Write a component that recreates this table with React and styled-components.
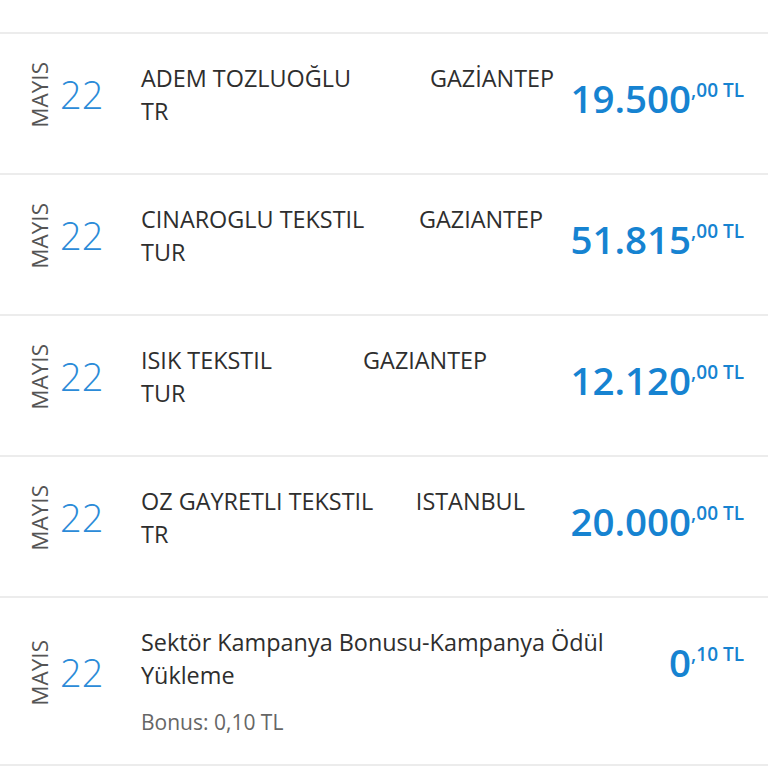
import styled, { createGlobalStyle } from 'styled-components'

const GlobalStyle = createGlobalStyle`
	html, body {
		margin: 0;
		padding: 0;
		background: #ffffff;
	}
	body {
		font-family: "Open Sans", "Noto Sans", sans-serif;
	}
`

// merchant field is space padded like the bank's statement text
const pad = (name, n) => name + ' '.repeat(n)

const transactions = [
	{ id: 1, month: 'MAYIS', day: '22', title: pad('ADEM TOZLUOĞLU', 13) + 'GAZİANTEP\nTR', whole: '19.500', cents: '00' },
	{ id: 2, month: 'MAYIS', day: '22', title: pad('CINAROGLU TEKSTIL', 9) + 'GAZIANTEP\nTUR', whole: '51.815', cents: '00' },
	{ id: 3, month: 'MAYIS', day: '22', title: pad('ISIK TEKSTIL', 15) + 'GAZIANTEP\nTUR', whole: '12.120', cents: '00' },
	{ id: 4, month: 'MAYIS', day: '22', title: pad('OZ GAYRETLI TEKSTIL', 7) + 'ISTANBUL\nTR', whole: '20.000', cents: '00' },
	{ id: 5, month: 'MAYIS', day: '22', title: 'Sektör Kampanya Bonusu-Kampanya Ödül Yükleme', bonus: 'Bonus: 0,10 TL', whole: '0', cents: '10' },
]

function App() {
	return (
		<>
			<GlobalStyle />
			<List>
				{transactions.map((t) => (
					<Row key={t.id}>
						<DateBlock>
							<Month>{t.month}</Month>
							<Day>{t.day}</Day>
						</DateBlock>
						<Body>
							<Info>
								<Title>{t.title}</Title>
								{t.bonus && <Bonus>{t.bonus}</Bonus>}
							</Info>
							<Amount>
								<Whole>{t.whole}</Whole>
								<Cents>,{t.cents} TL</Cents>
							</Amount>
						</Body>
					</Row>
				))}
			</List>
		</>
	)
}
export default App

const List = styled.div`
	padding-top: 32px;
	background: #ffffff;
`

const Row = styled.div`
	display: flex;
	align-items: center;
	padding: 28px 24px 28px 28px;
	border-top: 2px solid #ececec;
	&:last-child {
		border-bottom: 2px solid #ececec;
	}
`

const DateBlock = styled.div`
	display: flex;
	align-items: flex-start;
	height: 83px;
	width: 113px;
	flex: none;
`

const Month = styled.div`
	writing-mode: vertical-rl;
	transform: rotate(180deg);
	font-size: 22.5px;
	line-height: 24px;
	color: #555555;
`

const Day = styled.div`
	margin: 8px 0 0 8px;
	font-size: 38px;
	font-weight: 300;
	line-height: 48px;
	color: #2b8bd8;
`

const Body = styled.div`
	flex: 1;
	display: flex;
	align-items: flex-start;
	align-self: stretch;
`

const Info = styled.div`
	flex: 1;
	min-width: 0;
`

const Title = styled.div`
	font-size: 23.4px;
	line-height: 33px;
	color: #2e2e2e;
	white-space: pre-wrap;
`

const Bonus = styled.div`
	margin-top: 16px;
	font-size: 21px;
	line-height: 28px;
	color: #666666;
`

const Amount = styled.div`
	flex: none;
	display: flex;
	align-items: flex-start;
	margin: 15px 0 0 6px;
	color: #1683d1;
	font-weight: 600;
`

const Whole = styled.span`
	font-size: 38.5px;
	line-height: 42px;
`

const Cents = styled.span`
	font-size: 19px;
	line-height: 20px;
	margin-top: 3px;
`
